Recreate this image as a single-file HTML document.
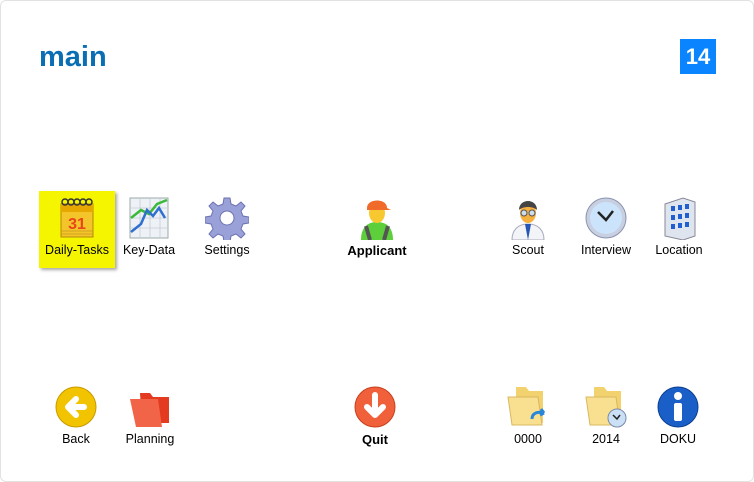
<!DOCTYPE html>
<html><head><meta charset="utf-8"><style>
body{margin:0;width:754px;height:476px;background:#fff;font-family:"Liberation Sans",Arial,sans-serif;overflow:hidden;position:relative}
.frame{position:absolute;left:0;top:0;width:752px;height:480px;border:1px solid #e2e2e2;border-radius:6px}
.title{position:absolute;left:39px;top:43px;font-size:29px;line-height:29px;font-weight:bold;color:#0a6eb4}
.badge{position:absolute;left:680px;top:39px;width:36px;height:35px;background:#0a84ff;color:#fff;font-size:22px;font-weight:bold;text-align:center;line-height:35px}
.it{position:absolute;width:90px;text-align:center;font-size:12.5px;color:#000}
.it svg{display:block;margin:0 auto}
.lab{position:absolute;left:0;width:90px;text-align:center}
.hl{position:absolute;left:39px;top:191px;width:76px;height:77px;background:#f5f500;box-shadow:2px 2px 3px rgba(0,0,0,.35)}
</style></head><body>
<div class="frame"></div>
<div class="title">main</div>
<div class="badge">14</div>
<div class="hl"></div>

<!-- row 1 -->
<div class="it" style="left:32px;top:196px"><svg width="44" height="44" viewBox="0 0 44 44"><rect x="6" y="8" width="32" height="33" fill="#f3c52a" stroke="#b8860b"/><rect x="6" y="8" width="32" height="8" fill="#e6a800"/><g stroke="#333" fill="none" stroke-width="1.5"><circle cx="10" cy="6" r="3"/><circle cx="16" cy="6" r="3"/><circle cx="22" cy="6" r="3"/><circle cx="28" cy="6" r="3"/><circle cx="34" cy="6" r="3"/></g><text x="22" y="33" font-size="16" font-weight="bold" fill="#e8451a" text-anchor="middle" font-family="Liberation Sans">31</text><g stroke="#c99a1a" stroke-width=".7"><line x1="6" y1="35" x2="38" y2="35"/><line x1="6" y1="38" x2="38" y2="38"/></g></svg><div class="lab" style="top:47px">Daily-Tasks</div></div>
<div class="it" style="left:104px;top:196px"><svg width="44" height="44" viewBox="0 0 44 44"><rect x="3" y="2" width="38" height="40" fill="#eef1f6" stroke="#9aa"/><g stroke="#c6ccd6" stroke-width=".8"><line x1="3" y1="12" x2="41" y2="12"/><line x1="3" y1="22" x2="41" y2="22"/><line x1="3" y1="32" x2="41" y2="32"/><line x1="13" y1="2" x2="13" y2="42"/><line x1="23" y1="2" x2="23" y2="42"/><line x1="33" y1="2" x2="33" y2="42"/></g><polyline points="4,22 14,14 22,18 30,8 40,4" fill="none" stroke="#3bb93b" stroke-width="2.5"/><polyline points="4,36 14,28 20,14 26,20 32,12 38,22" fill="none" stroke="#2f6fd0" stroke-width="2.5"/></svg><div class="lab" style="top:47px">Key-Data</div></div>
<div class="it" style="left:182px;top:196px"><svg width="44" height="44" viewBox="0 0 44 44"><g fill="#9aa0d8" stroke="#6c72b0"><path d="M19 2h6l1 6 5 2 5-4 4 4-4 5 2 5 6 1v6l-6 1-2 5 4 5-4 4-5-4-5 2-1 6h-6l-1-6-5-2-5 4-4-4 4-5-2-5-6-1v-6l6-1 2-5-4-5 4-4 5 4 5-2z"/></g><circle cx="22" cy="22" r="7" fill="#fff" stroke="#6c72b0"/></svg><div class="lab" style="top:47px">Settings</div></div>
<div class="it" style="left:332px;top:196px"><svg width="44" height="44" viewBox="0 0 44 44"><path d="M6 44c0-12 6-18 16-18s16 6 16 18z" fill="#5ccf3a"/><path d="M11 30l4 14M33 30l-4 14" stroke="#555" stroke-width="4"/><ellipse cx="22" cy="17" rx="8" ry="10" fill="#f8c830"/><path d="M12 12c0-10 20-10 20 0l4 2H12z" fill="#f06a2a"/></svg><div class="lab" style="top:47px;font-weight:bold;font-size:13px">Applicant</div></div>
<div class="it" style="left:483px;top:196px"><svg width="44" height="44" viewBox="0 0 44 44"><path d="M6 44c0-10 6-16 16-16s16 6 16 16z" fill="#f2f4f8" stroke="#aab"/><path d="M19 28h6l-3 16z" fill="#2555b5"/><ellipse cx="22" cy="17" rx="8" ry="10" fill="#f5b040"/><path d="M13 14c0-12 18-12 18 0-4-4-14-4-18 0z" fill="#444"/><circle cx="18" cy="17" r="3" fill="#cde" stroke="#555"/><circle cx="26" cy="17" r="3" fill="#cde" stroke="#555"/></svg><div class="lab" style="top:47px">Scout</div></div>
<div class="it" style="left:561px;top:196px"><svg width="44" height="44" viewBox="0 0 44 44"><circle cx="22" cy="22" r="20" fill="#c8cfe0" stroke="#8a94b0"/><circle cx="22" cy="22" r="16" fill="#cbe4fb"/><path d="M14 16l8 8 7-9" fill="none" stroke="#222" stroke-width="2.5"/></svg><div class="lab" style="top:47px">Interview</div></div>
<div class="it" style="left:634px;top:196px"><svg width="44" height="44" viewBox="0 0 44 44"><path d="M8 8l18-6 12 4v34l-12 4-18-4z" fill="#dfe5ee" stroke="#889"/><g fill="#1f5fd0"><rect x="14" y="10" width="4" height="5"/><rect x="21" y="9" width="4" height="5"/><rect x="28" y="8" width="4" height="5"/><rect x="14" y="19" width="4" height="5"/><rect x="21" y="18" width="4" height="5"/><rect x="28" y="17" width="4" height="5"/><rect x="14" y="28" width="4" height="5"/><rect x="21" y="27" width="4" height="5"/><rect x="28" y="26" width="4" height="5"/></g></svg><div class="lab" style="top:47px">Location</div></div>

<!-- row 2 -->
<div class="it" style="left:31px;top:385px"><svg width="44" height="44" viewBox="0 0 44 44"><circle cx="22" cy="22" r="20" fill="#f2c400" stroke="#c99a00"/><path d="M30 22H16M22 14l-8 8 8 8" fill="none" stroke="#fff" stroke-width="6" stroke-linecap="round" stroke-linejoin="round"/></svg><div class="lab" style="top:47px">Back</div></div>
<div class="it" style="left:105px;top:385px"><svg width="44" height="44" viewBox="0 0 44 44"><path d="M12 8h10l3 4h16v26H14z" fill="#e33a20"/><path d="M2 14h28l4 28H8z" fill="#f26447"/></svg><div class="lab" style="top:47px">Planning</div></div>
<div class="it" style="left:330px;top:385px"><svg width="44" height="44" viewBox="0 0 44 44"><circle cx="22" cy="22" r="20" fill="#f0603a" stroke="#c8401f"/><path d="M22 10v18M14 22l8 8 8-8" fill="none" stroke="#fff" stroke-width="6" stroke-linecap="round" stroke-linejoin="round"/></svg><div class="lab" style="top:47px;font-weight:bold;font-size:13px">Quit</div></div>
<div class="it" style="left:483px;top:385px"><svg width="44" height="44" viewBox="0 0 44 44"><path d="M10 2h10l3 4h14v32H10z" fill="#f2d26e"/><path d="M2 12h30l4 28H6z" fill="#f8e090" stroke="#d8b860"/><path d="M26 34c0-6 6-8 12-6M38 28l-3-4M38 28l-4 2" fill="none" stroke="#2a86d8" stroke-width="3"/></svg><div class="lab" style="top:47px">0000</div></div>
<div class="it" style="left:561px;top:385px"><svg width="44" height="44" viewBox="0 0 44 44"><path d="M10 2h10l3 4h14v32H10z" fill="#f2d26e"/><path d="M2 12h30l4 28H6z" fill="#f8e090" stroke="#d8b860"/><circle cx="33" cy="33" r="9" fill="#cbe0f5" stroke="#7a8aa8"/><path d="M29 30l4 4 3-4" fill="none" stroke="#222" stroke-width="1.5"/></svg><div class="lab" style="top:47px">2014</div></div>
<div class="it" style="left:633px;top:385px"><svg width="44" height="44" viewBox="0 0 44 44"><circle cx="22" cy="22" r="20" fill="#1a5fc8" stroke="#0c3f90"/><circle cx="22" cy="11" r="4" fill="#fff"/><rect x="18" y="18" width="8" height="18" rx="2" fill="#fff"/></svg><div class="lab" style="top:47px">DOKU</div></div>
</body></html>
